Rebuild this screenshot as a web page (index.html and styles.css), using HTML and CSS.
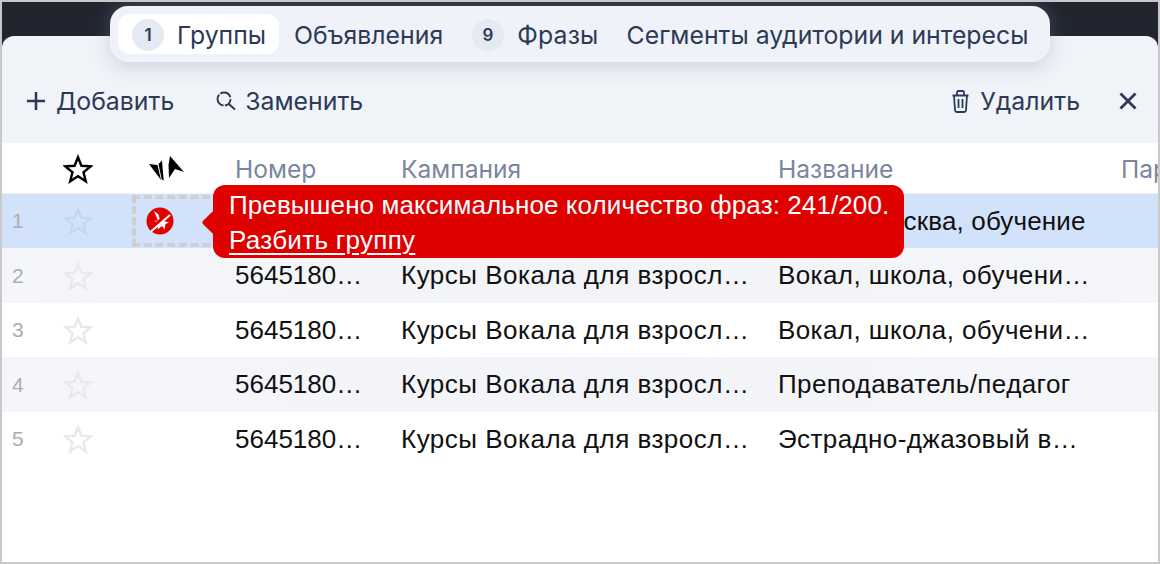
FILE: index.html
```html
<!DOCTYPE html>
<html lang="ru">
<head>
<meta charset="utf-8">
<title>Группы</title>
<link rel="stylesheet" href="styles.css">
</head>
<body>
<svg class="defs" width="0" height="0" aria-hidden="true">
  <symbol id="star" viewBox="0 0 30 30"><path d="M15 3.200l3.400 8.600 9.200.6-7.100 5.900 2.300 9-7.800-5-7.800 5 2.300-9-7.100-5.900 9.200-.6z" fill="none" stroke="currentColor" stroke-width="2.400"/></symbol>
</svg>
<div class="frame">
  <nav class="tabs">
    <a class="tab tab-active"><span class="badge">1</span>Группы</a>
    <a class="tab">Объявления</a>
    <a class="tab tab-phrases"><span class="badge">9</span>Фразы</a>
    <a class="tab">Сегменты аудитории и интересы</a>
  </nav>
  <div class="panel">
    <div class="toolbar">
      <button class="tool tool-add">
        <svg class="ico-plus" viewBox="0 0 22 22"><path d="M11 1v20M1 11h20" stroke="currentColor" stroke-width="2.800" fill="none"/></svg>Добавить
      </button>
      <button class="tool tool-replace">
        <svg class="ico-search" viewBox="0 0 20 20"><circle cx="8" cy="8" r="6.500" fill="none" stroke="currentColor" stroke-width="1.900" stroke-dasharray="9 1.500 14 1.500 12 2"/><path d="M12.500 12.800l6.500 5.700" stroke="currentColor" stroke-width="2" fill="none"/></svg>Заменить
      </button>
      <span class="spacer"></span>
      <button class="tool tool-delete">
        <svg class="ico-trash" viewBox="0 0 17 23"><path d="M.5 5.500h16M5 5.500V2.500q0-1.500 1.500-1.500h4q1.500 0 1.500 1.500v3M2 5.500l1 14.500q.2 2 2 2h7q1.800 0 2-2l1-14.500M6.500 9v9M10.500 9v9" fill="none" stroke="currentColor" stroke-width="1.800"/></svg>Удалить
      </button>
      <button class="tool tool-close" aria-label="Закрыть">
        <svg class="ico-close" viewBox="0 0 18 18"><path d="M1.500 1.500l15 15M16.500 1.500l-15 15" stroke="currentColor" stroke-width="2.800" fill="none"/></svg>
      </button>
    </div>
    <div class="table">
      <div class="row head">
        <span class="c-num"></span>
        <span class="c-star"><svg class="star star-head"><use href="#star"/></svg></span>
        <span class="c-flag"><svg class="ico-wings" viewBox="0 0 36 26"><path d="M0 9l8.500 1 3.500 15z" fill="currentColor"/><path d="M9.500 9L13 5.500l1.700 20-2-1z" fill="currentColor"/><path d="M21 1l14 16-9-3-6 9-.5-13z" fill="currentColor"/></svg></span>
        <span class="c-id">Номер</span>
        <span class="c-camp">Кампания</span>
        <span class="c-name">Название</span>
        <span class="c-par">Параметры</span>
      </div>
      <div class="row sel">
        <span class="c-num">1</span>
        <span class="c-star"><svg class="star star-sel"><use href="#star"/></svg></span>
        <span class="c-flag"><span class="dashed"><svg class="ico-err" viewBox="0 0 28 28"><circle cx="14" cy="14" r="13.500" fill="#e00000"/><path d="M8 4l4.500 3.500L14 13l9 2.500-3.500 1.500-1 5.500-2.500-3.500-4.500 3.500 1-6.500-4.500-2 4-.5z" fill="#fff"/><path d="M4 23L24 6" stroke="#e00000" stroke-width="4.500"/><path d="M5 24.500L24 8" stroke="#fff" stroke-width="2"/></svg></span></span>
        <span class="c-id">5645180…</span>
        <span class="c-camp">Курсы Вокала для взросл…</span>
        <span class="c-name">Вокал, Москва, обучение</span>
      </div>
      <div class="row alt">
        <span class="c-num">2</span>
        <span class="c-star"><svg class="star"><use href="#star"/></svg></span>
        <span class="c-flag"></span>
        <span class="c-id">5645180…</span>
        <span class="c-camp">Курсы Вокала для взросл…</span>
        <span class="c-name">Вокал, школа, обучени…</span>
      </div>
      <div class="row">
        <span class="c-num">3</span>
        <span class="c-star"><svg class="star"><use href="#star"/></svg></span>
        <span class="c-flag"></span>
        <span class="c-id">5645180…</span>
        <span class="c-camp">Курсы Вокала для взросл…</span>
        <span class="c-name">Вокал, школа, обучени…</span>
      </div>
      <div class="row alt">
        <span class="c-num">4</span>
        <span class="c-star"><svg class="star"><use href="#star"/></svg></span>
        <span class="c-flag"></span>
        <span class="c-id">5645180…</span>
        <span class="c-camp">Курсы Вокала для взросл…</span>
        <span class="c-name">Преподаватель/педагог</span>
      </div>
      <div class="row">
        <span class="c-num">5</span>
        <span class="c-star"><svg class="star"><use href="#star"/></svg></span>
        <span class="c-flag"></span>
        <span class="c-id">5645180…</span>
        <span class="c-camp">Курсы Вокала для взросл…</span>
        <span class="c-name">Эстрадно-джазовый в…</span>
      </div>
    </div>
  </div>
  <div class="tooltip">
    <span class="tooltip-arrow"></span>
    <div class="tooltip-text">Превышено максимальное количество фраз: 241/200.</div>
    <a class="tooltip-link">Разбить группу</a>
  </div>
</div>
</body>
</html>
```
FILE: styles.css
```css
* { box-sizing: border-box; }
html, body { margin: 0; height: 100%; }
body { background: #fff; overflow: hidden; }
.defs { position: absolute; }
.frame {
  position: relative;
  width: 1160px;
  height: 564px;
  border: 2px solid #c9c9c9;
  background: #20252f;
  overflow: hidden;
  padding-top: 34px;
  font-family: "Liberation Sans", Arial, sans-serif;
}
.tabs {
  position: absolute;
  left: 108px;
  top: 4px;
  width: 940px;
  height: 56px;
  padding: 8px;
  border-radius: 18px;
  background: #eff2f8;
  box-shadow: 0 6px 18px rgba(70, 85, 125, .16), 0 -4px 22px rgba(200, 210, 235, .18);
  display: flex;
  z-index: 2;
  font-family: Inter, "Liberation Sans", sans-serif;
  font-size: 24.800px;
  color: #2c3a56;
}
.tab {
  display: flex;
  align-items: center;
  height: 40px;
  padding: 1px 14px 0;
  border-radius: 12px;
  white-space: nowrap;
}
.tab-active { background: #fff; padding-right: 13px; margin-right: 1px; }
.tab-phrases { margin-left: 1px; letter-spacing: .2px; }
.badge {
  width: 32px;
  height: 32px;
  border-radius: 50%;
  background: #e5e9f2;
  display: flex;
  align-items: center;
  justify-content: center;
  font-size: 17px;
  font-weight: 600;
  margin-right: 13px;
}
.panel {
  height: 526px;
  border-radius: 12px 12px 0 0;
  background: linear-gradient(#f0f3f8, #f2f4f9);
  overflow: hidden;
}
.toolbar {
  height: 107px;
  padding: 23px 21px 0 24px;
  display: flex;
  align-items: center;
  font-family: Inter, "Liberation Sans", sans-serif;
  font-size: 24.800px;
  color: #2c3a56;
}
.spacer { flex: 1; }
.tool {
  display: flex;
  align-items: center;
  padding: 0;
  border: 0;
  background: none;
  font: inherit;
  color: inherit;
}
.tool-replace { margin-left: 42px; }
.tool-close { margin-left: 39px; }
.ico-plus { width: 20px; height: 20px; margin-right: 10px; }
.ico-search { width: 20px; height: 20px; margin-right: 9px; }
.ico-trash { width: 17px; height: 23px; margin-right: 11px; }
.ico-close { width: 18px; height: 18px; }
.table { background: #fff; height: 419px; }
.row {
  display: grid;
  grid-template-columns: 52px 48px 133px 166px 377px 343px 40px;
  height: 54.500px;
  align-items: center;
  font-size: 26px;
  color: #111;
  white-space: nowrap;
  overflow: hidden;
  padding-top: 1px;
}
.row.head {
  height: 51px;
  color: #7a869f;
  font-family: Inter, "Liberation Sans", sans-serif;
  font-size: 24.600px;
  border-bottom: 1px solid #f2f3f5;
}
.row.sel { background: #d3e2fb; height: 54px; padding-top: 0; }
.row.alt { background: linear-gradient(90deg, #f4f6fa, #f2f4f8 50%, #f5f6fa); }
.c-camp { letter-spacing: .5px; }
.c-name { letter-spacing: .4px; }
.sel .c-name { letter-spacing: .15px; }
.head .c-camp, .head .c-name { letter-spacing: 0; }
.c-num { padding-left: 10px; font-size: 21px; color: #adadad; }
.c-star { display: flex; justify-content: center; }
.star { width: 30px; height: 30px; color: #e9e9ec; }
.star-head { color: #000; }
.star-sel { color: #c6d6f2; }
.c-flag { display: flex; align-self: stretch; }
.ico-wings { width: 36px; height: 26px; color: #000; margin: 11px 0 0 47px; }
.dashed {
  width: 90px;
  height: 52px;
  margin: 1px 0 0 30px;
  border: 4px dashed #cfcfcf;
  display: flex;
  align-items: center;
  padding-left: 10px;
}
.ico-err { width: 28px; height: 28px; }
.c-par { overflow: hidden; }
.tooltip {
  position: absolute;
  left: 211px;
  top: 183px;
  width: 691px;
  height: 73px;
  background: #df0000;
  border-radius: 12px;
  padding: 3px 0 0 16px;
  color: #fff;
  font-size: 26px;
  line-height: 35px;
  white-space: nowrap;
  z-index: 3;
}
.tooltip-text { letter-spacing: .1px; }
.tooltip-arrow {
  position: absolute;
  left: -8.500px;
  top: 28.500px;
  width: 17px;
  height: 17px;
  background: #df0000;
  transform: rotate(45deg);
  border-radius: 2px;
}
.tooltip-link {
  letter-spacing: .3px;
  text-decoration: underline;
  text-decoration-thickness: 2px;
  text-underline-offset: 4px;
}
```
